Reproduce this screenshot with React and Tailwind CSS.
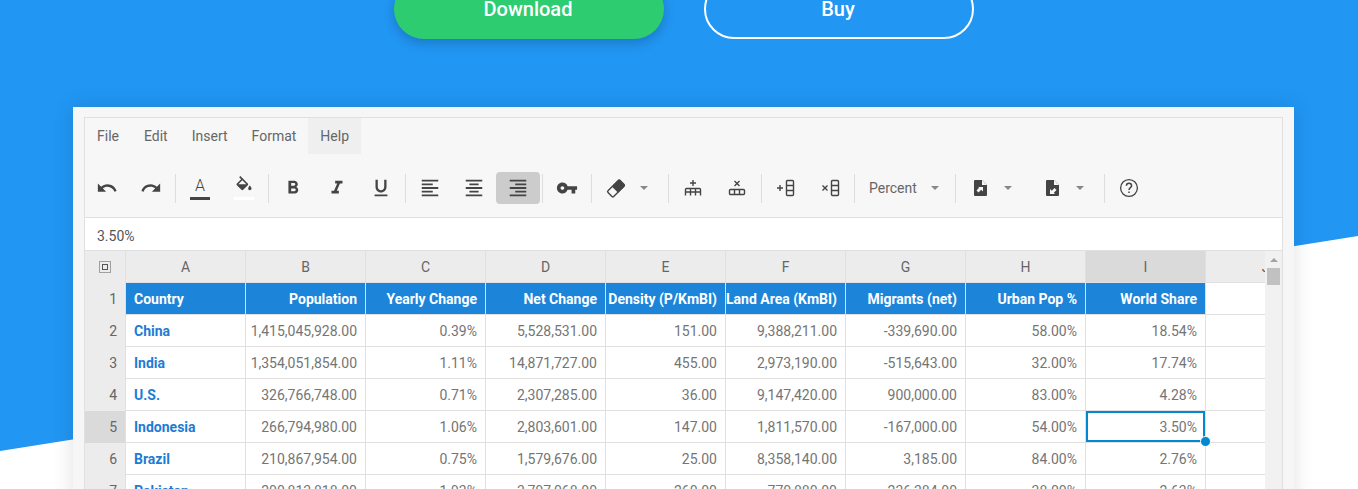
import {
  MdUndo,
  MdRedo,
  MdFormatBold,
  MdFormatItalic,
  MdFormatUnderlined,
  MdFormatAlignLeft,
  MdFormatAlignCenter,
  MdFormatAlignRight,
  MdVpnKey,
} from 'react-icons/md';

const columns = ['A', 'B', 'C', 'D', 'E', 'F', 'G', 'H', 'I', 'J'];

const titles = [
  'Country',
  'Population',
  'Yearly Change',
  'Net Change',
  'Density (P/KmBI)',
  'Land Area (KmBI)',
  'Migrants (net)',
  'Urban Pop %',
  'World Share',
];

const rows = [
  ['China', '1,415,045,928.00', '0.39%', '5,528,531.00', '151.00', '9,388,211.00', '-339,690.00', '58.00%', '18.54%'],
  ['India', '1,354,051,854.00', '1.11%', '14,871,727.00', '455.00', '2,973,190.00', '-515,643.00', '32.00%', '17.74%'],
  ['U.S.', '326,766,748.00', '0.71%', '2,307,285.00', '36.00', '9,147,420.00', '900,000.00', '83.00%', '4.28%'],
  ['Indonesia', '266,794,980.00', '1.06%', '2,803,601.00', '147.00', '1,811,570.00', '-167,000.00', '54.00%', '3.50%'],
  ['Brazil', '210,867,954.00', '0.75%', '1,579,676.00', '25.00', '8,358,140.00', '3,185.00', '84.00%', '2.76%'],
  ['Pakistan', '200,813,818.00', '1.93%', '3,797,068.00', '260.00', '770,880.00', '-236,384.00', '38.00%', '2.63%'],
];

const Sep = () => <div className="mx-[2px] h-[29px] w-px bg-[#dddddd]" />;

const Btn = ({ children, active }) => (
  <div className={`flex h-8 w-11 items-center justify-center rounded-sm text-[#444444] ${active ? 'bg-[#cccccc]' : ''}`}>
    {children}
  </div>
);

const Caret = () => <div className="h-0 w-0 border-x-4 border-t-4 border-x-transparent border-t-[#888888]" />;

const Eraser = () => (
  <svg width="24" height="24" viewBox="0 0 24 24">
    <g transform="rotate(-45 12 12.5)">
      <rect x="3.5" y="8.5" width="17" height="8" rx="1.2" fill="none" stroke="#444444" strokeWidth="1.4" />
      <path d="M10.5 8h9a1.5 1.5 0 0 1 1.5 1.5v6a1.5 1.5 0 0 1-1.5 1.5h-9z" fill="#444444" />
    </g>
  </svg>
);

const FillBucket = () => (
  <svg width="20" height="20" viewBox="0 0 24 24" fill="#444444">
    <path d="M16.56 8.94L7.62 0 6.21 1.41l2.38 2.38-5.15 5.15c-.59.59-.59 1.54 0 2.12l5.5 5.5c.29.29.68.44 1.06.44s.77-.15 1.06-.44l5.5-5.5c.59-.58.59-1.53 0-2.12zM5.21 10L10 5.21 14.79 10H5.21zM19 11.5s-2 2.17-2 3.5c0 1.1.9 2 2 2s2-.9 2-2c0-1.33-2-3.5-2-3.5z" />
  </svg>
);

const Help = () => (
  <svg width="24" height="24" viewBox="0 0 24 24" fill="none" stroke="#444444" strokeWidth="1.3">
    <circle cx="12" cy="12" r="8.4" />
    <path d="M9.4 9.8a2.6 2.6 0 0 1 5.2 0c0 1.9-2.6 1.9-2.6 4.2" strokeWidth="1.5" />
    <path d="M12 15.4v1.6" strokeWidth="1.5" />
  </svg>
);

const AddRow = () => (
  <svg width="24" height="24" viewBox="0 0 24 24" fill="none" stroke="#444444" strokeWidth="1.4">
    <path d="M12 4v6M9 7h6" />
    <path d="M4.5 19.5v-6a1 1 0 0 1 1-1h13a1 1 0 0 1 1 1v6M4.5 16h15M9.5 12.5v7M14.5 12.5v7" />
  </svg>
);

const DelRow = () => (
  <svg width="24" height="24" viewBox="0 0 24 24" fill="none" stroke="#444444" strokeWidth="1.4">
    <path d="M9.5 5l5 5M14.5 5l-5 5" />
    <rect x="4.5" y="13.5" width="15" height="5" rx="1" />
    <path d="M9.5 13.5v5M14.5 13.5v5" />
  </svg>
);

const AddCol = () => (
  <svg width="24" height="24" viewBox="0 0 24 24" fill="none" stroke="#444444" strokeWidth="1.4">
    <path d="M3 12h6M6 9v6" />
    <rect x="12.5" y="4.5" width="7" height="15" rx="1" />
    <path d="M12.5 9.5h7M12.5 14.5h7" />
  </svg>
);

const DelCol = () => (
  <svg width="24" height="24" viewBox="0 0 24 24" fill="none" stroke="#444444" strokeWidth="1.4">
    <path d="M4.5 9.5l5 5M9.5 9.5l-5 5" />
    <rect x="13.5" y="4.5" width="7" height="15" rx="1" />
    <path d="M13.5 9.5h7M13.5 14.5h7" />
  </svg>
);

const FileIcon = ({ arrow }) => (
  <svg width="24" height="24" viewBox="0 0 24 24">
    <path d="M7 4h7l5 5v10a1 1 0 0 1-1 1H7a1 1 0 0 1-1-1V5a1 1 0 0 1 1-1z" fill="#444444" />
    <path d="M14 4v5h5z" fill="#f7f7f7" />
    <path d={arrow} fill="#f7f7f7" />
  </svg>
);

const Header = ({ children, selected }) => (
  <div
    className={`flex h-8 w-[120px] shrink-0 items-center justify-center border-r border-b border-[#e0e0e0] text-[#666666] ${
      selected ? 'bg-[#dadada]' : 'bg-[#ececec]'
    }`}
  >
    {children}
  </div>
);

const RowNum = ({ children, selected }) => (
  <div
    className={`flex h-8 w-[41px] shrink-0 items-center justify-end border-r border-[#e0e0e0] pr-2 text-[#666666] ${
      selected ? 'bg-[#dadada]' : 'bg-[#ececec]'
    }`}
  >
    {children}
  </div>
);

const App = () => {
  return (
    <div className="relative h-[489px] w-full overflow-hidden bg-white font-[Roboto,sans-serif] text-sm">
      {/* Blue slanted background */}
      <div className="absolute inset-0 bg-[#2196f3] [clip-path:polygon(0_0,100%_0,100%_236px,0_451px)]" />

      <div className="relative flex w-[1368px] flex-col items-center">
        {/* Hero buttons */}
        <div className="-mt-[21px] flex gap-10">
          <div className="flex h-[60px] w-[270px] items-center justify-center rounded-full bg-[#2ecc71] pr-[2px] text-xl font-medium text-white shadow-[0_4px_12px_rgba(0,0,0,0.2)]">
            Download
          </div>
          <div className="flex h-[60px] w-[270px] items-center justify-center rounded-full border-2 border-white pr-[2px] text-xl font-medium text-white">
            Buy
          </div>
        </div>

        {/* Card */}
        <div className="mt-[68px] ml-[73px] w-[1221px] self-start bg-[#f6f6f6] px-[11px] pt-[10px] shadow-[0_0_20px_rgba(0,0,0,0.12)]">
          <div className="border border-[#e0e0e0] bg-[#f7f7f7] text-[#666666]">
            {/* Menu */}
            <div className="flex h-9">
              {['File', 'Edit', 'Insert', 'Format', 'Help'].map((m) => (
                <div key={m} className={`flex items-center px-3 ${m === 'Help' ? 'bg-[#efefef]' : ''} ${m === 'File' ? 'mr-px' : ''}`}>
                  {m}
                </div>
              ))}
            </div>

            {/* Toolbar */}
            <div className="flex h-16 items-center border-b border-[#e0e0e0] pt-[5px]">
              <Btn><MdUndo size={22} /></Btn>
              <Btn><MdRedo size={22} /></Btn>
              <Sep />
              <Btn>
                <div className="flex flex-col items-center">
                  <span className="text-base leading-5 font-light">A</span>
                  <div className="mt-[1px] h-[3px] w-5 bg-[#444444]" />
                </div>
              </Btn>
              <Btn>
                <div className="flex flex-col items-center">
                  <FillBucket />
                  <div className="mt-[1px] h-[3px] w-5 bg-white" />
                </div>
              </Btn>
              <Sep />
              <Btn><MdFormatBold size={22} /></Btn>
              <Btn><MdFormatItalic size={22} /></Btn>
              <Btn><MdFormatUnderlined size={22} /></Btn>
              <Sep />
              <Btn><MdFormatAlignLeft size={22} /></Btn>
              <Btn><MdFormatAlignCenter size={22} /></Btn>
              <Btn active><MdFormatAlignRight size={22} /></Btn>
              <Sep />
              <Btn><MdVpnKey size={22} /></Btn>
              <Sep />
              <Btn><Eraser /></Btn>
              <div className="w-7 pl-[2px]"><Caret /></div>
              <Sep />
              <Btn><AddRow /></Btn>
              <Btn><DelRow /></Btn>
              <Sep />
              <Btn><AddCol /></Btn>
              <Btn><DelCol /></Btn>
              <Sep />
              <div className="flex h-8 w-[96px] items-center gap-[14px] pl-3">
                <span>Percent</span>
                <Caret />
              </div>
              <Sep />
              <Btn><FileIcon arrow="M15 11v4.5l-1.8-1.8-2.7 2.8-2-2 2.7-2.7L9.9 11z" /></Btn>
              <div className="w-7 pl-[2px]"><Caret /></div>
              <Btn><FileIcon arrow="M10 18v-5l1.8 1.8 2.7-2.8 2 2-2.7 2.8 1.2 1.2z" /></Btn>
              <div className="w-7 pl-[2px]"><Caret /></div>
              <Sep />
              <Btn><Help /></Btn>
            </div>

            {/* Formula bar */}
            <div className="flex h-[33px] items-center border-b border-[#e0e0e0] bg-white px-3 pt-[3px] text-[#555555]">3.50%</div>

            {/* Sheet */}
            <div className="flex bg-white">
              <div className="w-[1181px] overflow-hidden">
                <div className="flex">
                  <div className="flex h-8 w-[41px] shrink-0 items-center justify-center border-r border-[#e0e0e0] bg-[#ececec]">
                    <svg width="12" height="12" viewBox="0 0 12 12" fill="none" stroke="#555555">
                      <rect x="0.5" y="0.5" width="11" height="11" strokeDasharray="1 1" />
                      <rect x="3.5" y="3.5" width="5" height="5" />
                    </svg>
                  </div>
                  {columns.map((c) => (
                    <Header key={c} selected={c === 'I'}>{c}</Header>
                  ))}
                </div>

                <div className="flex">
                  <RowNum>1</RowNum>
                  {titles.map((t, i) => (
                    <div
                      key={t}
                      className={`flex h-8 w-[120px] shrink-0 items-center overflow-hidden border-r border-b border-[#e0e0e0] bg-[#1c84d9] font-bold whitespace-nowrap text-white ${
                        i === 0 ? 'justify-start pl-2' : 'justify-end pr-2'
                      }`}
                    >
                      {t}
                    </div>
                  ))}
                  <div className="h-8 w-[120px] shrink-0 border-b border-[#e0e0e0]" />
                </div>

                {rows.map((row, r) => (
                  <div key={row[0]} className="flex">
                    <RowNum selected={r === 3}>{r + 2}</RowNum>
                    {row.map((val, i) => (
                      <div
                        key={i}
                        className={`relative flex h-8 w-[120px] shrink-0 items-center border-r border-b border-[#e0e0e0] whitespace-nowrap ${
                          i === 0 ? 'justify-start pl-2 font-bold text-[#1c7cd5]' : 'justify-end pr-2 text-[#757575]'
                        }`}
                      >
                        {val}
                        {r === 3 && i === 8 && (
                          <>
                            <div className="absolute top-0 left-0 h-[31px] w-[119px] border-2 border-[#0288d1]" />
                            <div className="absolute -right-[6px] -bottom-[5px] z-10 h-[11px] w-[11px] rounded-full border border-white bg-[#0288d1]" />
                          </>
                        )}
                      </div>
                    ))}
                    <div className="h-8 w-[120px] shrink-0 border-b border-[#e0e0e0]" />
                  </div>
                ))}
              </div>

              {/* Scrollbar */}
              <div className="flex w-[17px] flex-col items-center bg-[#f1f1f1] pt-[7px]">
                <div className="h-0 w-0 border-x-4 border-b-4 border-x-transparent border-b-[#a3a3a3]" />
                <div className="mt-[6px] h-[17px] w-[13px] bg-[#c1c1c1]" />
              </div>
            </div>
          </div>
        </div>
      </div>
    </div>
  );
};

export default App;
